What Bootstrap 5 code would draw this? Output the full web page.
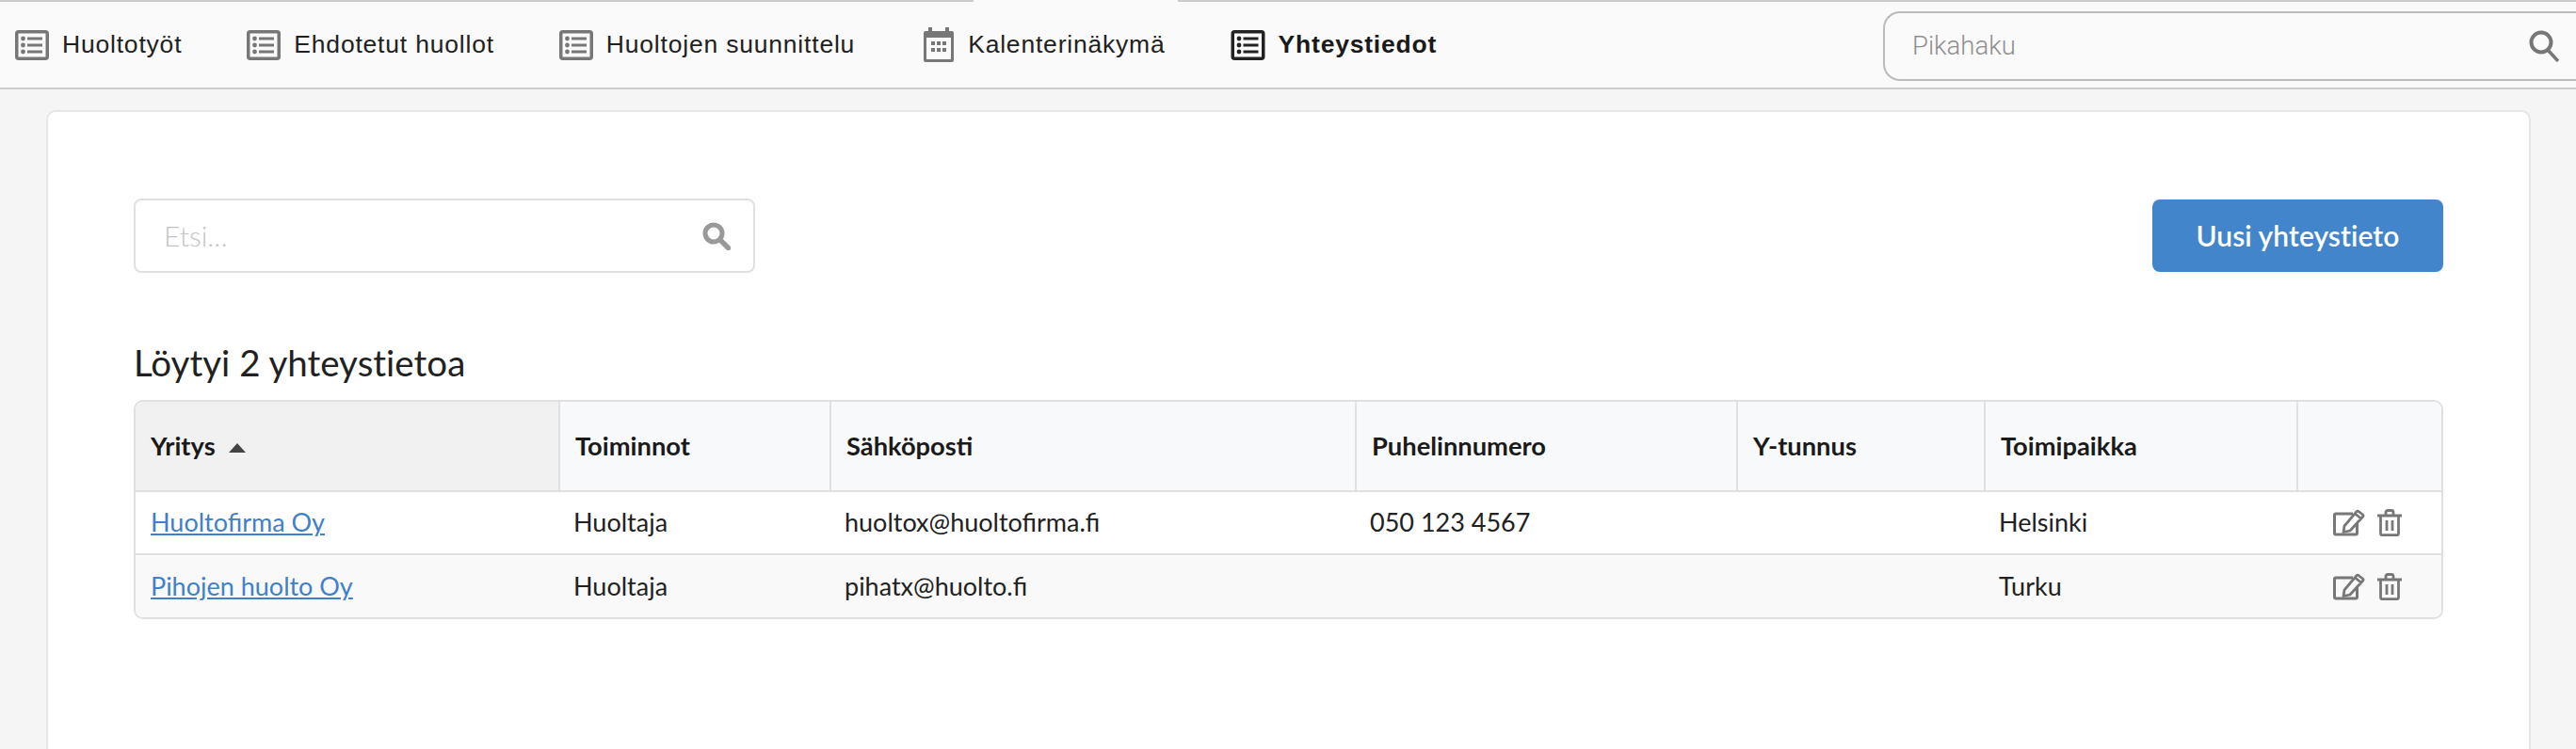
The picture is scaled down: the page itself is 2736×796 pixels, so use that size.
<!DOCTYPE html>
<html lang="fi">
<head>
<meta charset="utf-8">
<title>Yhteystiedot</title>
<link href="https://cdn.jsdelivr.net/npm/bootstrap@5.3.0/dist/css/bootstrap.min.css" rel="stylesheet">
<style>
html,body{height:100%;overflow:hidden}
body{background:#f5f5f5;font-family:Lato,"Liberation Sans",sans-serif;color:#212121}
.top-strip{height:2px}
.strip-a{width:1034px;background:#ccc}
.strip-b{width:217px;background:#fafafa}
.strip-c{background:#ccc}
.main-nav{height:93px;background:#fafafa;border-bottom:2px solid #ccc;padding-left:16px;overflow:hidden}
.nav-entry{font-family:"Liberation Sans",Arial,sans-serif;font-size:26.5px;letter-spacing:.8px;color:#212121;text-decoration:none;margin-right:69px;gap:14px;white-space:nowrap}
.nav-entry.is-current{font-weight:700;color:#1a1a1a}
.nav-entry svg{flex:none}
.cal-entry{margin-right:69px;gap:15px;margin-left:4px}
.quick-search{width:736px;height:74px;border:2px solid #bbb;border-right:0;border-radius:18px 0 0 18px;margin-top:3px;padding-right:16px;background:#fafafa}
.quick-search input{background:transparent;border:0;box-shadow:none;font-family:Roboto,"Liberation Sans",sans-serif;font-size:27.5px;font-weight:300;padding:0 0 0 29px;color:#333}
.quick-search input::placeholder{color:#8f8f8f}
.panel-box{margin:22px 48px 0 49px;background:#fff;border:2px solid #e5e5e5;border-bottom:0;border-radius:10px 10px 0 0;padding:92px 91px 0;height:700px}
.find-box{width:660px;height:79px;border:2px solid #e0e0e0;border-radius:8px;padding-right:24px}
.find-box input{border:0;box-shadow:none;font-family:Lato,sans-serif;font-size:30px;font-weight:300;padding:0 0 0 30px}
.find-box input::placeholder{color:#c4c4c4}
.new-btn{width:309px;height:77px;background:#4285cb;border:0;border-radius:8px;color:#fff;font-size:30px;font-weight:600;letter-spacing:.05px}
.result-title{font-size:38.5px;font-weight:400;letter-spacing:.01px;margin:73px 0 18px;line-height:44px;color:#212121}
.table-shell{border:2px solid #e0e0e0;border-radius:10px;overflow:hidden;width:2453px}
.contact-table{table-layout:fixed;margin:0;font-size:27px;--bs-table-bg:transparent;color:#212121;border-collapse:collapse}
.contact-table th{height:95px;background:#f8f9fb;font-weight:700;font-size:27.3px;vertical-align:middle;padding:0 16px;border-bottom:2px solid #e0e0e0;border-right:2px solid #e0e0e0;color:#1a1a1a}
.contact-table th:last-child{border-right:0}
.contact-table th.sorted{background:#f1f1f1}
.contact-table td{height:67px;vertical-align:middle;padding:0 15px;border-bottom:2px solid #e0e0e0;white-space:nowrap}
.contact-table td:first-child{padding-left:16px}
.contact-table tr:last-child td{border-bottom:0;height:67px}
.contact-table tbody tr:nth-child(2){background:#f9f9f9}
.contact-table a{color:#3f80c9}
.w-a{width:450px}.w-b{width:288px}.w-c{width:558px}.w-d{width:405px}.w-e{width:263px}.w-f{width:332px}.w-g{width:153px}
.sort-mark{display:inline-block;width:0;height:0;border-left:9px solid transparent;border-right:9px solid transparent;border-bottom:10px solid #444;margin-left:14px;vertical-align:3px}
.act-icons{gap:13px;padding-left:23px}
</style>
</head>
<body>
<svg width="0" height="0" class="d-block">
<defs>
<symbol id="ic-list" viewBox="0 0 36 32"><rect x="1.750" y="1.750" width="32.500" height="28.500" rx="2" fill="none" stroke="currentColor" stroke-width="3.500"/><circle cx="8.500" cy="9" r="2.400" fill="currentColor"/><circle cx="8.500" cy="16" r="2.400" fill="currentColor"/><circle cx="8.500" cy="23" r="2.400" fill="currentColor"/><path d="M13 9h16M13 16h16M13 23h16" stroke="currentColor" stroke-width="3"/></symbol>
<symbol id="ic-edit" viewBox="0 0 34 29"><path d="M21 5H3a1.500 1.500 0 0 0-1.500 1.500v19A1.500 1.500 0 0 0 3 27h21a1.500 1.500 0 0 0 1.500-1.500V15" fill="none" stroke="currentColor" stroke-width="3"/><path d="M27 2.500l4.500 3.500a1.500 1.500 0 0 1 .2 2L18 23l-7 1.500 1-6.500L25 2.700a1.500 1.500 0 0 1 2-.2zM23.500 5l6 5" fill="none" stroke="currentColor" stroke-width="2.800" stroke-linejoin="round"/></symbol>
<symbol id="ic-trash" viewBox="0 0 26 29"><path d="M0 7h26M9 6V3.500A2 2 0 0 1 11 1.500h4a2 2 0 0 1 2 2V6M3.500 7v19a1.700 1.700 0 0 0 1.700 1.700h15.600a1.700 1.700 0 0 0 1.700-1.700V7M10 12v11M16 12v11" fill="none" stroke="currentColor" stroke-width="2.800"/></symbol>
</defs>
</svg>
<div class="d-flex top-strip"><div class="strip-a"></div><div class="strip-b"></div><div class="strip-c flex-grow-1"></div></div>
<nav class="main-nav d-flex align-items-center">
  <a class="nav-entry d-flex align-items-center" href="#"><svg width="36" height="32" color="#777"><use href="#ic-list"/></svg>Huoltotyöt</a>
  <a class="nav-entry d-flex align-items-center" href="#"><svg width="36" height="32" color="#777"><use href="#ic-list"/></svg>Ehdotetut huollot</a>
  <a class="nav-entry d-flex align-items-center" href="#"><svg width="36" height="32" color="#777"><use href="#ic-list"/></svg>Huoltojen suunnittelu</a>
  <a class="nav-entry cal-entry d-flex align-items-center" href="#"><svg width="32" height="37" viewBox="0 0 32 37" fill="#777"><path d="M5 0h4v4h14V0h4v4h3a2 2 0 0 1 2 2v29a2 2 0 0 1-2 2H2a2 2 0 0 1-2-2V6a2 2 0 0 1 2-2h3z"/><rect x="3" y="11" width="26" height="23" fill="#fafafa"/><path d="M8 15h4v4H8zM14 15h4v4h-4zM20 15h4v4h-4zM8 22h4v4H8zM14 22h4v4h-4zM20 22h4v4h-4z"/></svg>Kalenterinäkymä</a>
  <a class="nav-entry is-current d-flex align-items-center" href="#"><svg width="37" height="32" color="#222"><use href="#ic-list"/></svg>Yhteystiedot</a>
  <div class="quick-search ms-auto d-flex align-items-center">
    <input class="form-control" type="text" placeholder="Pikahaku" aria-label="Pikahaku">
    <svg width="34" height="34" viewBox="0 0 34 34" fill="none" stroke="#777" class="flex-shrink-0"><circle cx="13" cy="13" r="10.500" stroke-width="4"/><path d="M20 21l11 12" stroke-width="3.500"/></svg>
  </div>
</nav>
<main class="panel-box">
  <div class="d-flex justify-content-between align-items-center">
    <div class="find-box d-flex align-items-center">
      <input class="form-control" type="text" placeholder="Etsi..." aria-label="Etsi">
      <svg width="30" height="30" viewBox="0 0 30 30" fill="none" stroke="#999" class="flex-shrink-0"><circle cx="12" cy="12" r="9" stroke-width="5"/><path d="M19 19l8.500 8.500" stroke-width="5.500" stroke-linecap="round"/></svg>
    </div>
    <button class="btn new-btn" type="button">Uusi yhteystieto</button>
  </div>
  <h2 class="result-title">Löytyi 2 yhteystietoa</h2>
  <div class="table-shell">
    <table class="table contact-table">
      <colgroup><col class="w-a"><col class="w-b"><col class="w-c"><col class="w-d"><col class="w-e"><col class="w-f"><col class="w-g"></colgroup>
      <thead>
        <tr><th class="sorted">Yritys<span class="sort-mark"></span></th><th>Toiminnot</th><th>Sähköposti</th><th>Puhelinnumero</th><th>Y-tunnus</th><th>Toimipaikka</th><th></th></tr>
      </thead>
      <tbody>
        <tr><td><a href="#">Huoltofirma Oy</a></td><td>Huoltaja</td><td>huoltox@huoltofirma.fi</td><td>050 123 4567</td><td></td><td>Helsinki</td><td><div class="d-flex act-icons"><svg width="34" height="29" color="#777"><use href="#ic-edit"/></svg><svg width="26" height="29" color="#777"><use href="#ic-trash"/></svg></div></td></tr>
        <tr><td><a href="#">Pihojen huolto Oy</a></td><td>Huoltaja</td><td>pihatx@huolto.fi</td><td></td><td></td><td>Turku</td><td><div class="d-flex act-icons"><svg width="34" height="29" color="#777"><use href="#ic-edit"/></svg><svg width="26" height="29" color="#777"><use href="#ic-trash"/></svg></div></td></tr>
      </tbody>
    </table>
  </div>
</main>
</body>
</html>
